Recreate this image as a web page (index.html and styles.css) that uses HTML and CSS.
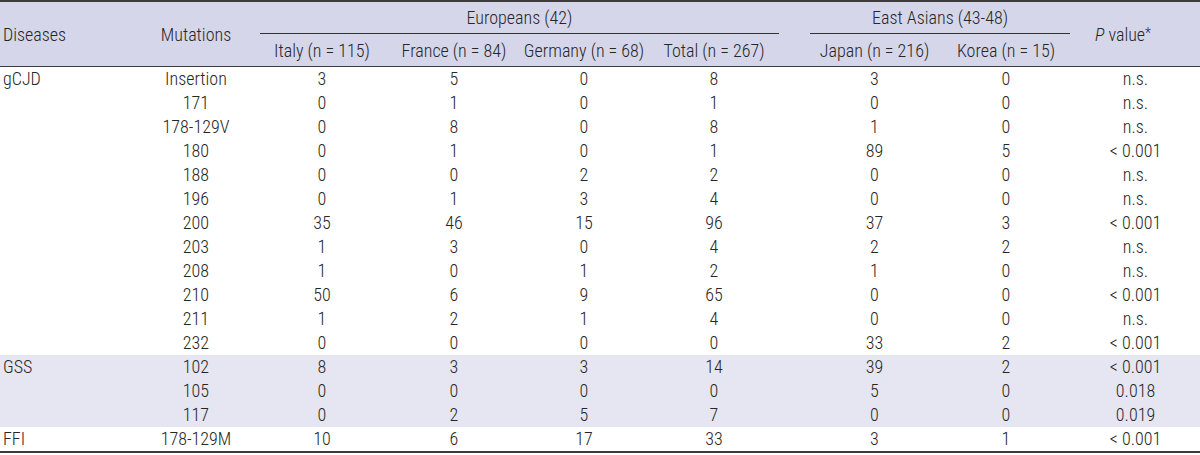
FILE: index.html
```html
<!DOCTYPE html>
<html>
<head>
<meta charset="utf-8">
<link rel="stylesheet" href="styles.css">
</head>
<body>
<table class="data">
  <colgroup>
    <col class="c-dis"><col class="c-mut"><col class="c-ita"><col class="c-fra"><col class="c-ger"><col class="c-tot"><col class="c-sp"><col class="c-jap"><col class="c-kor"><col class="c-p">
  </colgroup>
  <thead>
    <tr class="h1">
      <th rowspan="2" class="left">Diseases</th>
      <th rowspan="2">Mutations</th>
      <th colspan="4" class="grp"><div class="grp-eu">Europeans (42)</div></th>
      <th rowspan="2"></th>
      <th colspan="2" class="grp"><div class="grp-ea">East Asians (43-48)</div></th>
      <th rowspan="2" class="pv"><i>P</i> value<span class="ast">*</span></th>
    </tr>
    <tr class="h2">
      <th>Italy (n = 115)</th>
      <th>France (n = 84)</th>
      <th>Germany (n = 68)</th>
      <th>Total (n = 267)</th>
      <th>Japan (n = 216)</th>
      <th>Korea (n = 15)</th>
    </tr>
  </thead>
  <tbody>
    <tr><td class="left">gCJD</td><td>Insertion</td><td>3</td><td>5</td><td>0</td><td>8</td><td></td><td>3</td><td>0</td><td>n.s.</td></tr>
    <tr><td></td><td>171</td><td>0</td><td>1</td><td>0</td><td>1</td><td></td><td>0</td><td>0</td><td>n.s.</td></tr>
    <tr><td></td><td>178-129V</td><td>0</td><td>8</td><td>0</td><td>8</td><td></td><td>1</td><td>0</td><td>n.s.</td></tr>
    <tr><td></td><td>180</td><td>0</td><td>1</td><td>0</td><td>1</td><td></td><td>89</td><td>5</td><td>&lt; 0.001</td></tr>
    <tr><td></td><td>188</td><td>0</td><td>0</td><td>2</td><td>2</td><td></td><td>0</td><td>0</td><td>n.s.</td></tr>
    <tr><td></td><td>196</td><td>0</td><td>1</td><td>3</td><td>4</td><td></td><td>0</td><td>0</td><td>n.s.</td></tr>
    <tr><td></td><td>200</td><td>35</td><td>46</td><td>15</td><td>96</td><td></td><td>37</td><td>3</td><td>&lt; 0.001</td></tr>
    <tr><td></td><td>203</td><td>1</td><td>3</td><td>0</td><td>4</td><td></td><td>2</td><td>2</td><td>n.s.</td></tr>
    <tr><td></td><td>208</td><td>1</td><td>0</td><td>1</td><td>2</td><td></td><td>1</td><td>0</td><td>n.s.</td></tr>
    <tr><td></td><td>210</td><td>50</td><td>6</td><td>9</td><td>65</td><td></td><td>0</td><td>0</td><td>&lt; 0.001</td></tr>
    <tr><td></td><td>211</td><td>1</td><td>2</td><td>1</td><td>4</td><td></td><td>0</td><td>0</td><td>n.s.</td></tr>
    <tr><td></td><td>232</td><td>0</td><td>0</td><td>0</td><td>0</td><td></td><td>33</td><td>2</td><td>&lt; 0.001</td></tr>
    <tr class="band"><td class="left">GSS</td><td>102</td><td>8</td><td>3</td><td>3</td><td>14</td><td></td><td>39</td><td>2</td><td>&lt; 0.001</td></tr>
    <tr class="band"><td></td><td>105</td><td>0</td><td>0</td><td>0</td><td>0</td><td></td><td>5</td><td>0</td><td>0.018</td></tr>
    <tr class="band"><td></td><td>117</td><td>0</td><td>2</td><td>5</td><td>7</td><td></td><td>0</td><td>0</td><td>0.019</td></tr>
    <tr><td class="left">FFI</td><td>178-129M</td><td>10</td><td>6</td><td>17</td><td>33</td><td></td><td>3</td><td>1</td><td>&lt; 0.001</td></tr>
  </tbody>
</table>
</body>
</html>
```
FILE: styles.css
```css
html, body {
  margin: 0;
  padding: 0;
  background: #ffffff;
}

.data {
  width: 1200px;
  table-layout: fixed;
  border-collapse: collapse;
  font-family: "Roboto Condensed", "Liberation Sans", sans-serif;
  font-weight: 300;
  font-size: 18px;
  color: #262626;
  border-top: 2px solid #3c3c3c;
  border-bottom: 2px solid #3c3c3c;
}

.c-dis { width: 133px; }
.c-mut { width: 126px; }
.c-ita { width: 126px; }
.c-fra { width: 138px; }
.c-ger { width: 122px; }
.c-tot { width: 138px; }
.c-sp  { width: 25px; }
.c-jap { width: 133px; }
.c-kor { width: 130px; }
.c-p   { width: 129px; }

th, td {
  padding: 0;
  text-align: center;
  white-space: nowrap;
  font-weight: 300;
}

thead {
  background: #d6d6ea;
  border-bottom: 1px solid #3c3c3c;
}

.h1 th { height: 32px; }
.h2 th { height: 32px; }

th.left, td.left {
  text-align: left;
  padding-left: 3px;
}

th.grp {
  vertical-align: top;
}

.grp-eu, .grp-ea {
  height: 31px;
  line-height: 31px;
  border-bottom: 1px solid #333333;
  box-sizing: content-box;
}

.grp-eu { margin: 0 4px 0 1px; }
.grp-ea { margin: 0 1px 0 2px; }

th.pv {
  padding-right: 25px;
}

.ast {
  font-size: 14px;
  vertical-align: 3px;
}

tbody td {
  height: 24px;
  line-height: 24px;
}

tr.band td {
  background: #e6e6f2;
}
```
